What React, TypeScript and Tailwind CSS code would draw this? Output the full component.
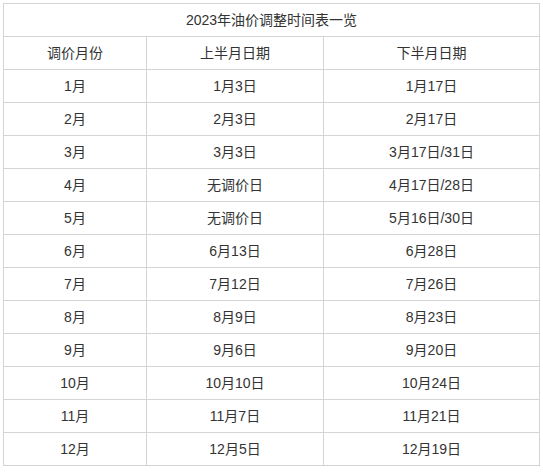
import * as React from 'react'

const rows: [string, string, string][] = [
	['1月', '1月3日', '1月17日'],
	['2月', '2月3日', '2月17日'],
	['3月', '3月3日', '3月17日/31日'],
	['4月', '无调价日', '4月17日/28日'],
	['5月', '无调价日', '5月16日/30日'],
	['6月', '6月13日', '6月28日'],
	['7月', '7月12日', '7月26日'],
	['8月', '8月9日', '8月23日'],
	['9月', '9月6日', '9月20日'],
	['10月', '10月10日', '10月24日'],
	['11月', '11月7日', '11月21日'],
	['12月', '12月5日', '12月19日'],
]

const cell = 'border border-[#d4d4d4] h-[33px] p-0 text-center align-middle'

export default function App() {
	return (
		<div
			className="bg-white w-[543px] h-[473px] pt-[3px] pl-[3px] text-[14px] text-[#333]"
			style={{ fontFamily: '"Microsoft YaHei", Arial, "Noto Sans CJK SC", sans-serif' }}
		>
			<table className="border-collapse table-fixed w-[536px]">
				<colgroup>
					<col className="w-[143px]" />
					<col className="w-[177px]" />
					<col className="w-[216px]" />
				</colgroup>
				<tbody>
					<tr>
						<td colSpan={3} className={cell}>
							2023年油价调整时间表一览
						</td>
					</tr>
					<tr>
						<td className={cell}>调价月份</td>
						<td className={cell}>上半月日期</td>
						<td className={cell}>下半月日期</td>
					</tr>
					{rows.map((r) => (
						<tr key={r[0]}>
							<td className={cell}>{r[0]}</td>
							<td className={cell}>{r[1]}</td>
							<td className={cell}>{r[2]}</td>
						</tr>
					))}
				</tbody>
			</table>
		</div>
	)
}
